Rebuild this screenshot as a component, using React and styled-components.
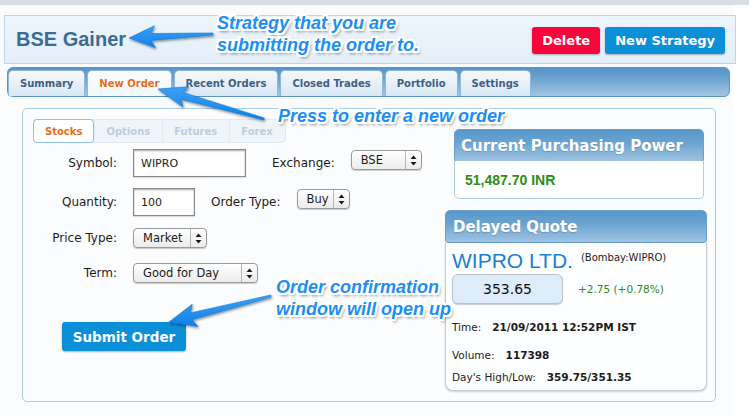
import styled, { createGlobalStyle } from "styled-components";

const GlobalStyle = createGlobalStyle`
  html, body {
    margin: 0;
    padding: 0;
    background: #ffffff;
    font-family: "DejaVu Sans", Verdana, sans-serif;
    color: #1c1c1c;
  }
  * {
    box-sizing: border-box;
  }
`;

const tabs = [
  "Summary",
  "New Order",
  "Recent Orders",
  "Closed Trades",
  "Portfolio",
  "Settings",
];

const assetTabs = ["Stocks", "Options", "Futures", "Forex"];

// tapered annotation arrow, from tail to tip
const arrowPoints = (tail, tip, headLen, headWidth, w0, w1) => {
  const dx = tip[0] - tail[0];
  const dy = tip[1] - tail[1];
  const len = Math.hypot(dx, dy);
  const ux = dx / len;
  const uy = dy / len;
  const nx = -uy;
  const ny = ux;
  const bx = tip[0] - ux * headLen;
  const by = tip[1] - uy * headLen;
  const back = 4;
  const pts = [
    [tail[0] + (nx * w0) / 2, tail[1] + (ny * w0) / 2],
    [bx + (nx * w1) / 2, by + (ny * w1) / 2],
    [bx - ux * back + (nx * headWidth) / 2, by - uy * back + (ny * headWidth) / 2],
    tip,
    [bx - ux * back - (nx * headWidth) / 2, by - uy * back - (ny * headWidth) / 2],
    [bx - (nx * w1) / 2, by - (ny * w1) / 2],
    [tail[0] - (nx * w0) / 2, tail[1] - (ny * w0) / 2],
  ];
  return pts.map((p) => p.map((v) => v.toFixed(1)).join(",")).join(" ");
};

const arrows = [
  { tail: [213, 34], tip: [129, 38], headLen: 22, headWidth: 22 },
  { tail: [264, 119], tip: [158, 89], headLen: 25, headWidth: 21 },
  { tail: [271, 296], tip: [169, 322], headLen: 23, headWidth: 23 },
];

const notes = [
  { left: 217, top: 12, lines: ["Strategy that you are", "submitting the order to."] },
  { left: 278, top: 105, lines: ["Press to enter a new order"] },
  { left: 276, top: 276, lines: ["Order confirmation", "window will open up"] },
];

const UpDown = () => (
  <svg width="7" height="11" viewBox="0 0 7 11">
    <path d="M3.5 0.5 L6.5 4 L0.5 4 Z" fill="#1a1a1a" />
    <path d="M3.5 10.5 L6.5 7 L0.5 7 Z" fill="#1a1a1a" />
  </svg>
);

const PopUp = ({ value, width, $top }) => (
  <Select $width={width} $top={$top}>
    <SelectValue>{value}</SelectValue>
    <SelectArrow>
      <UpDown />
    </SelectArrow>
  </Select>
);

export default function App() {
  return (
    <Root>
      <GlobalStyle />
      <TopStrip />
      <Header>
        <Title>BSE Gainer</Title>
        <HeaderActions>
          <ActionButton $color="#f6063a">Delete</ActionButton>
          <ActionButton $color="#0b8fd9">New Strategy</ActionButton>
        </HeaderActions>
      </Header>

      <TabBar>
        {tabs.map((t) => (
          <Tab key={t} $active={t === "New Order"}>
            {t}
          </Tab>
        ))}
      </TabBar>

      <MainPanel>
        <FormColumn>
          <AssetTabs>
            {assetTabs.map((t) => (
              <AssetTab key={t} $active={t === "Stocks"}>
                {t}
              </AssetTab>
            ))}
          </AssetTabs>

          <FormRow $mt={6}>
            <Label>Symbol:</Label>
            <TextInput $width={113}>WIPRO</TextInput>
            <SideLabel $gap={26}>Exchange:</SideLabel>
            <PopUp value="BSE" width={71} $top />
          </FormRow>

          <FormRow $mt={11}>
            <Label>Quantity:</Label>
            <TextInput $width={62}>100</TextInput>
            <SideLabel $gap={16}>Order Type:</SideLabel>
            <PopUp value="Buy" width={53} $top />
          </FormRow>

          <FormRow $mt={12}>
            <Label>Price Type:</Label>
            <PopUp value="Market" width={74} />
          </FormRow>

          <FormRow $mt={15}>
            <Label>Term:</Label>
            <PopUp value="Good for Day" width={125} />
          </FormRow>

          <SubmitButton>Submit Order</SubmitButton>
        </FormColumn>

        <SideColumn>
          <PowerBox>
            <BoxHeader $pad={6}>Current Purchasing Power</BoxHeader>
            <PowerBody>51,487.70 INR</PowerBody>
          </PowerBox>

          <QuoteBox>
            <BoxHeader $pad={7}>Delayed Quote</BoxHeader>
            <QuoteBody>
              <NameRow>
                <CompanyName>WIPRO LTD.</CompanyName>
                <Ticker>(Bombay:WIPRO)</Ticker>
              </NameRow>
              <PriceRow>
                <PriceBox>353.65</PriceBox>
                <Change>+2.75 (+0.78%)</Change>
              </PriceRow>
              <StatRow $mt={16}>
                Time:<StatValue>21/09/2011 12:52PM IST</StatValue>
              </StatRow>
              <StatRow $mt={14}>
                Volume:<StatValue>117398</StatValue>
              </StatRow>
              <StatRow $mt={8}>
                Day's High/Low:<StatValue>359.75/351.35</StatValue>
              </StatRow>
            </QuoteBody>
          </QuoteBox>
        </SideColumn>
      </MainPanel>

      <ArrowLayer width="749" height="416" viewBox="0 0 749 416">
        <defs>
          <filter id="arrowShadow" x="-20%" y="-50%" width="140%" height="200%">
            <feDropShadow dx="1" dy="1.5" stdDeviation="1.2" floodColor="#000" floodOpacity="0.45" />
          </filter>
          <linearGradient id="arrowFill" x1="0" y1="0" x2="0" y2="1">
            <stop offset="0" stopColor="#3aa2f7" />
            <stop offset="1" stopColor="#127fe6" />
          </linearGradient>
        </defs>
        {arrows.map((a, i) => (
          <polygon
            key={i}
            points={arrowPoints(a.tail, a.tip, a.headLen, a.headWidth, 2, 7)}
            fill="url(#arrowFill)"
            stroke="#0f78d8"
            strokeWidth="0.6"
            strokeLinejoin="round"
            filter="url(#arrowShadow)"
          />
        ))}
      </ArrowLayer>

      {notes.map((n, i) => (
        <Note key={i} style={{ left: n.left, top: n.top }}>
          {n.lines.map((l) => (
            <div key={l}>{l}</div>
          ))}
        </Note>
      ))}
    </Root>
  );
}

const Root = styled.div`
  position: relative;
  width: 749px;
  height: 416px;
  overflow: hidden;
  background: linear-gradient(90deg, #fafbfc 0, #fafbfc 733px, #ffffff 733px);
`;

const TopStrip = styled.div`
  height: 5px;
  background: #d7dee6;
`;

const Header = styled.div`
  margin: 10px 13px 0 4px;
  height: 49px;
  border: 1px solid #bcd6ec;
  background: linear-gradient(#edf5fc, #e4eff9);
  display: flex;
  align-items: center;
  justify-content: space-between;
  padding: 0 10px 0 11px;
`;

const Title = styled.h1`
  margin: 0;
  font-family: "Liberation Sans", Arial, sans-serif;
  font-size: 20px;
  font-weight: bold;
  color: #3c6b94;
`;

const HeaderActions = styled.div`
  display: flex;
  gap: 5px;
  margin-top: 1px;
`;

const ActionButton = styled.div`
  height: 27px;
  padding: 0 10px;
  display: flex;
  align-items: center;
  background: ${(p) => p.$color};
  color: #ffffff;
  font-size: 13px;
  font-weight: bold;
  border-radius: 3px;
  box-shadow: 0 1px 2px rgba(0, 0, 0, 0.3);
`;

const TabBar = styled.div`
  margin: 3px 19px 0 7px;
  height: 30px;
  border-radius: 6px;
  border: 1px solid #5b95c6;
  background: linear-gradient(#5795c8 0%, #6aa2d0 35%, #a1c5e2 100%);
  display: flex;
  align-items: flex-end;
  gap: 2px;
`;

const Tab = styled.div`
  height: 26px;
  padding: 0 11px;
  display: flex;
  align-items: center;
  font-size: 10px;
  font-weight: bold;
  color: ${(p) => (p.$active ? "#e86d19" : "#3e6084")};
  background: ${(p) =>
    p.$active
      ? "linear-gradient(#fbfdfe, #f2f7fb)"
      : "linear-gradient(#f6f9fc, #d9e7f3)"};
  border: 1px solid #8fb8dc;
  border-bottom: none;
  border-radius: 5px 5px 0 0;
`;

const MainPanel = styled.div`
  margin: 11px 33px 0 22px;
  height: 294px;
  border: 1px solid #a9cce7;
  border-radius: 5px;
  background: #fbfcfd;
  display: flex;
  padding: 10px 8px 0 10px;
`;

const FormColumn = styled.div`
  flex: 1;
  display: flex;
  flex-direction: column;
  align-items: flex-start;
`;

const AssetTabs = styled.div`
  display: flex;
  height: 24px;
  background: #eef4f9;
  border: 1px solid #dfe9f2;
  border-radius: 4px;
`;

const AssetTab = styled.div`
  display: flex;
  align-items: center;
  padding: 0 11px;
  margin: -1px 0;
  font-size: 10px;
  font-weight: bold;
  color: ${(p) => (p.$active ? "#e86d19" : "#bccedd")};
  background: ${(p) => (p.$active ? "#ffffff" : "transparent")};
  border: 1px solid ${(p) => (p.$active ? "#92bfe2" : "transparent")};
  border-left: 1px solid ${(p) => (p.$active ? "#92bfe2" : "#e2ebf3")};
  border-radius: ${(p) => (p.$active ? "4px" : "0")};
  &:first-child {
    margin-left: -1px;
  }
`;

const FormRow = styled.div`
  display: flex;
  align-items: center;
  margin-top: ${(p) => p.$mt}px;
`;

const Label = styled.div`
  width: 84px;
  margin-right: 16px;
  text-align: right;
  font-size: 12px;
  color: #1c1c1c;
`;

const SideLabel = styled.div`
  margin-left: ${(p) => p.$gap}px;
  margin-right: 16px;
  font-size: 12px;
  color: #1c1c1c;
`;

const TextInput = styled.div`
  width: ${(p) => p.$width}px;
  height: 28px;
  border: 1px solid #8a8a8a;
  background: #ffffff;
  box-shadow: inset 0 1px 2px rgba(0, 0, 0, 0.35), 0 1px 1px rgba(0, 0, 0, 0.12);
  display: flex;
  align-items: center;
  padding: 0 7px;
  font-size: 11px;
`;

const Select = styled.div`
  width: ${(p) => p.$width}px;
  height: 20px;
  align-self: ${(p) => (p.$top ? "flex-start" : "center")};
  margin-top: ${(p) => (p.$top ? 1 : 0)}px;
  display: flex;
  border: 1px solid #9a9a9a;
  border-radius: 4px;
  background: linear-gradient(#ffffff, #ececec);
  box-shadow: 0 1px 1px rgba(0, 0, 0, 0.2);
`;

const SelectValue = styled.div`
  flex: 1;
  display: flex;
  align-items: center;
  padding-left: 9px;
  font-size: 11.5px;
`;

const SelectArrow = styled.div`
  width: 16px;
  border-left: 1px solid #b5b5b5;
  display: flex;
  align-items: center;
  justify-content: center;
`;

const SubmitButton = styled.div`
  margin: 39px 0 0 29px;
  width: 124px;
  height: 29px;
  display: flex;
  align-items: center;
  justify-content: center;
  background: #0a8fd8;
  color: #ffffff;
  font-size: 13.5px;
  font-weight: bold;
  border-radius: 3px;
  box-shadow: 0 1px 2px rgba(0, 0, 0, 0.3);
`;

const SideColumn = styled.div`
  width: 262px;
  margin-top: 10px;
  display: flex;
  flex-direction: column;
`;

const PowerBox = styled.div`
  margin: 0 3px 0 9px;
`;

const BoxHeader = styled.div`
  height: 33px;
  display: flex;
  align-items: center;
  padding-left: ${(p) => p.$pad}px;
  background: linear-gradient(#5897ca 0%, #6aa3d1 40%, #9ec3e1 100%);
  border: 1px solid #6a9fcd;
  border-radius: 5px 5px 3px 3px;
  color: #ffffff;
  font-size: 15px;
  font-weight: bold;
  text-shadow: 0 1px 1px rgba(0, 0, 0, 0.15);
`;

const PowerBody = styled.div`
  height: 38px;
  margin-top: -1px;
  border: 1px solid #a9cbe6;
  border-top: none;
  border-radius: 0 0 5px 5px;
  background: #ffffff;
  display: flex;
  align-items: center;
  padding-left: 10px;
  font-family: "Liberation Sans", Arial, sans-serif;
  font-size: 14px;
  font-weight: bold;
  color: #2e8c21;
`;

const QuoteBox = styled.div`
  margin-top: 11px;
`;

const QuoteBody = styled.div`
  height: 148px;
  border: 1px solid #c6cacf;
  border-top: none;
  border-radius: 0 0 8px 8px;
  background: #fdfeff;
  box-shadow: 0 1px 2px rgba(0, 0, 0, 0.18);
  padding: 6px 6px 0 6px;
  display: flex;
  flex-direction: column;
`;

const NameRow = styled.div`
  display: flex;
  align-items: flex-start;
  height: 24px;
`;

const CompanyName = styled.div`
  font-family: "Liberation Sans", Arial, sans-serif;
  font-size: 21px;
  line-height: 24px;
  color: #1b7fd2;
`;

const Ticker = styled.div`
  margin-left: 8px;
  font-size: 10px;
  line-height: 18px;
  color: #1c1c1c;
`;

const PriceRow = styled.div`
  display: flex;
  align-items: center;
  margin-top: 1px;
`;

const PriceBox = styled.div`
  width: 111px;
  height: 30px;
  display: flex;
  align-items: center;
  justify-content: center;
  background: #deebf8;
  border: 1px solid #b9c3cc;
  border-radius: 6px;
  box-shadow: 0 1px 1px rgba(0, 0, 0, 0.2);
  font-size: 14px;
  color: #111111;
`;

const Change = styled.div`
  margin-left: 15px;
  font-size: 10.5px;
  color: #2b8a21;
`;

const StatRow = styled.div`
  margin-top: ${(p) => p.$mt}px;
  height: 14px;
  display: flex;
  align-items: center;
  font-size: 10.5px;
  color: #1c1c1c;
`;

const StatValue = styled.span`
  margin-left: 11px;
  font-weight: bold;
`;

const ArrowLayer = styled.svg`
  position: absolute;
  left: 0;
  top: 0;
  pointer-events: none;
`;

const Note = styled.div`
  position: absolute;
  font-family: "Liberation Sans", Arial, sans-serif;
  font-size: 18px;
  line-height: 22px;
  font-weight: bold;
  font-style: italic;
  color: #1d8ef2;
  white-space: nowrap;
  text-shadow:
    -2px -2px 0 #fff,
    2px -2px 0 #fff,
    -2px 2px 0 #fff,
    2px 2px 0 #fff,
    0 -2px 0 #fff,
    0 2px 0 #fff,
    -2px 0 0 #fff,
    2px 0 0 #fff,
    2px 3px 3px rgba(0, 0, 0, 0.5);
`;
